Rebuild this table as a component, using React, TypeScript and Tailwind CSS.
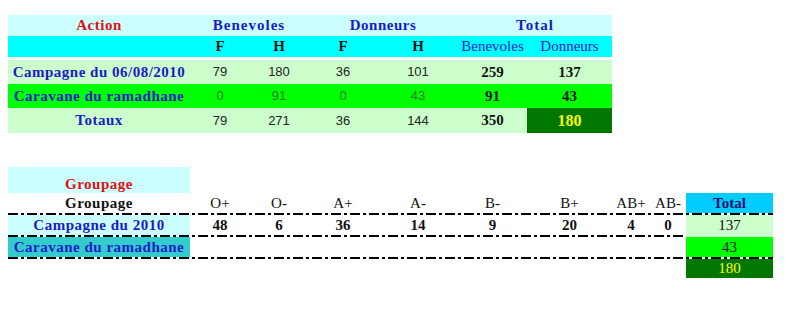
import React from "react";

const serif = "font-['Liberation_Serif','Times_New_Roman',serif]";
const sans = "font-['Liberation_Sans',Arial,sans-serif]";

function Dash({ span }: { span: string }) {
  return (
    <div
      className={`${span} h-[2px] self-center bg-[repeating-linear-gradient(90deg,#000_0px,#000_10px,transparent_10px,transparent_13px,#000_13px,#000_16px,transparent_16px,transparent_19px)]`}
    />
  );
}

export default function App() {
  const cell = "flex items-center justify-center";
  const label = `${serif} font-bold text-[15px] tracking-[0.5px] text-[#1a1acc]`;
  const num = `${sans} text-[13px] text-[#222]`;
  const numG = `${sans} text-[13px] text-[#2a7a2a]`;
  const tot = `${serif} font-bold text-[15px] text-[#111]`;
  const blood = ["O+", "O-", "A+", "A-", "B-", "B+", "AB+", "AB-"];
  const vals = ["48", "6", "36", "14", "9", "20", "4", "0"];

  return (
    <div className="w-[789px] h-[315px] bg-white relative overflow-hidden">
      {/* Top table */}
      <div className="ml-[8px] pt-[15px] grid grid-cols-[182px_60px_58px_70px_80px_69px_85px] grid-rows-[21px_21px_3px_24px_24px_25px] w-max">
        {/* header row 1 */}
        <div className={`${cell} bg-[#ccffff] ${serif} font-bold text-[15px] tracking-[0.5px] text-[#dd1111]`}>Action</div>
        <div className={`${cell} col-span-2 bg-[#ccffff] ${serif} font-bold text-[15px] tracking-[1px] text-[#1a1acc]`}>Benevoles</div>
        <div className={`${cell} col-span-2 bg-[#ccffff] ${serif} font-bold text-[15px] tracking-[0.5px] text-[#1a1acc]`}>Donneurs</div>
        <div className={`${cell} col-span-2 bg-[#ccffff] ${serif} font-bold text-[15px] tracking-[1px] text-[#1a1acc]`}>Total</div>
        {/* header row 2 */}
        <div className="bg-[#00ffff]" />
        <div className={`${cell} bg-[#00ffff] ${serif} font-bold text-[15px] text-[#111]`}>F</div>
        <div className={`${cell} bg-[#00ffff] ${serif} font-bold text-[15px] text-[#111]`}>H</div>
        <div className={`${cell} bg-[#00ffff] ${serif} font-bold text-[15px] text-[#111]`}>F</div>
        <div className={`${cell} bg-[#00ffff] ${serif} font-bold text-[15px] text-[#111]`}>H</div>
        <div className={`${cell} bg-[#00ffff] ${serif} text-[15px] text-[#1a1acc]`}>Benevoles</div>
        <div className={`${cell} bg-[#00ffff] ${serif} text-[15px] text-[#1a1acc]`}>Donneurs</div>
        {/* gap */}
        <div className="col-span-7" />
        {/* Campagne */}
        <div className={`${cell} bg-[#ccffcc] ${label}`}>Campagne du 06/08/2010</div>
        <div className={`${cell} bg-[#ccffcc] ${num}`}>79</div>
        <div className={`${cell} bg-[#ccffcc] ${num}`}>180</div>
        <div className={`${cell} bg-[#ccffcc] ${num}`}>36</div>
        <div className={`${cell} bg-[#ccffcc] ${num}`}>101</div>
        <div className={`${cell} bg-[#ccffcc] ${tot}`}>259</div>
        <div className={`${cell} bg-[#ccffcc] ${tot}`}>137</div>
        {/* Caravane */}
        <div className={`${cell} bg-[#00ff00] ${label}`}>Caravane du ramadhane</div>
        <div className={`${cell} bg-[#00ff00] ${numG}`}>0</div>
        <div className={`${cell} bg-[#00ff00] ${numG}`}>91</div>
        <div className={`${cell} bg-[#00ff00] ${numG}`}>0</div>
        <div className={`${cell} bg-[#00ff00] ${numG}`}>43</div>
        <div className={`${cell} bg-[#00ff00] ${tot}`}>91</div>
        <div className={`${cell} bg-[#00ff00] ${tot}`}>43</div>
        {/* Totaux */}
        <div className={`${cell} bg-[#ccffcc] ${label}`}>Totaux</div>
        <div className={`${cell} bg-[#ccffcc] ${num}`}>79</div>
        <div className={`${cell} bg-[#ccffcc] ${num}`}>271</div>
        <div className={`${cell} bg-[#ccffcc] ${num}`}>36</div>
        <div className={`${cell} bg-[#ccffcc] ${num}`}>144</div>
        <div className={`${cell} bg-[#ccffcc] ${tot}`}>350</div>
        <div className={`${cell} bg-[#007800] ${serif} font-bold text-[16px] text-[#ffff00]`}>180</div>
      </div>

      {/* Bottom table */}
      <div className="ml-[8px] mt-[34px] grid grid-cols-[182px_60px_58px_70px_80px_69px_85px_38px_36px_87px] grid-rows-[26px_20px_2px_20px_2px_20px_2px_19px] w-max">
        {/* row 1 */}
        <div className={`flex items-end justify-center pb-[1px] leading-[15px] bg-[#ccffff] ${serif} font-bold text-[15px] tracking-[0.5px] text-[#dd1111]`}>Groupage</div>
        <div className="col-span-9" />
        {/* row 2 */}
        <div className={`${cell} ${serif} font-bold text-[15px] tracking-[0.5px] text-[#111]`}>Groupage</div>
        {blood.map((b) => (
          <div key={b} className={`${cell} ${serif} text-[15px] text-[#111]`}>{b}</div>
        ))}
        <div className={`${cell} bg-[#00ccff] ${serif} font-bold text-[15px] text-[#10106a]`}>Total</div>
        <Dash span="col-span-10" />
        {/* row 3 */}
        <div className={`${cell} bg-[#ccffff] ${label}`}>Campagne du 2010</div>
        {vals.map((v, i) => (
          <div key={i} className={`${cell} ${serif} font-bold text-[15px] text-[#111]`}>{v}</div>
        ))}
        <div className={`${cell} bg-[#ccffcc] ${serif} text-[15px] text-[#111]`}>137</div>
        <Dash span="col-span-9" />
        <div className="bg-[#ccffcc]" />
        {/* row 4 */}
        <div className={`${cell} bg-[#33cccc] ${label}`}>Caravane du ramadhane</div>
        <div className="col-span-8" />
        <div className={`${cell} bg-[#00ff00] ${serif} text-[15px] text-[#111]`}>43</div>
        <Dash span="col-span-10" />
        {/* row 5 */}
        <div className="col-span-9" />
        <div className={`${cell} bg-[#007800] ${serif} text-[15px] text-[#ffff00]`}>180</div>
      </div>
    </div>
  );
}
